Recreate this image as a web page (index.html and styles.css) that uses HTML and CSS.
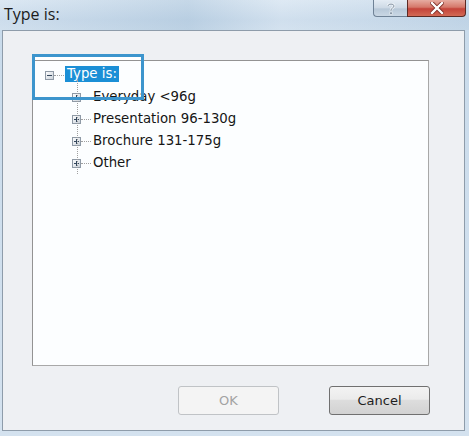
FILE: index.html
```html
<!DOCTYPE html>
<html>
<head>
<meta charset="utf-8">
<link rel="stylesheet" href="styles.css">
</head>
<body>
<div class="window">
  <div class="titlebar">
    <div class="title">Type is:</div>
    <div class="caption-buttons">
      <div class="cap-btn help">
        <svg width="12" height="13" viewBox="0 0 12 13"><path d="M3 4 C3 1.5 9 1.5 9 4 C9 6 6 6 6 8 L6 9" fill="none" stroke="#f4f7fa" stroke-width="2.4"/><path d="M3 4 C3 1.5 9 1.5 9 4 C9 6 6 6 6 8 L6 9" fill="none" stroke="#7f8fa0" stroke-width="1"/><rect x="4.8" y="10" width="2.4" height="2.4" fill="#7f8fa0" stroke="#f4f7fa" stroke-width="0.6"/></svg>
      </div>
      <div class="cap-btn close">
        <svg width="14" height="12" viewBox="0 0 14 12"><path d="M2 1 L12 11 M12 1 L2 11" stroke="#7a2a22" stroke-width="4" stroke-linecap="square"/><path d="M2 1 L12 11 M12 1 L2 11" stroke="#ffffff" stroke-width="2.4" stroke-linecap="square"/></svg>
      </div>
    </div>
  </div>
  <div class="panel">
    <div class="tree">
      <div class="row root">
        <span class="expander">
          <svg width="9" height="9" viewBox="0 0 9 9"><rect x="0.5" y="0.5" width="8" height="8" fill="url(#g1)" stroke="#8f9aa6"/><defs><linearGradient id="g1" x1="0" y1="0" x2="1" y2="1"><stop offset="0" stop-color="#ffffff"/><stop offset="1" stop-color="#c8d0d8"/></linearGradient></defs><path d="M2 4.5 H7" stroke="#33475c" stroke-width="1"/></svg>
        </span>
        <span class="hline"></span>
        <span class="label selected">Type is:</span>
      </div>
      <div class="children">
        <div class="row child">
          <span class="expander"><svg width="9" height="9" viewBox="0 0 9 9"><rect x="0.5" y="0.5" width="8" height="8" fill="url(#g1)" stroke="#8f9aa6"/><path d="M2 4.5 H7 M4.5 2 V7" stroke="#33475c" stroke-width="1"/></svg></span>
          <span class="hline"></span>
          <span class="label">Everyday &lt;96g</span>
        </div>
        <div class="row child">
          <span class="expander"><svg width="9" height="9" viewBox="0 0 9 9"><rect x="0.5" y="0.5" width="8" height="8" fill="url(#g1)" stroke="#8f9aa6"/><path d="M2 4.5 H7 M4.5 2 V7" stroke="#33475c" stroke-width="1"/></svg></span>
          <span class="hline"></span>
          <span class="label">Presentation 96-130g</span>
        </div>
        <div class="row child">
          <span class="expander"><svg width="9" height="9" viewBox="0 0 9 9"><rect x="0.5" y="0.5" width="8" height="8" fill="url(#g1)" stroke="#8f9aa6"/><path d="M2 4.5 H7 M4.5 2 V7" stroke="#33475c" stroke-width="1"/></svg></span>
          <span class="hline"></span>
          <span class="label">Brochure 131-175g</span>
        </div>
        <div class="row child">
          <span class="expander"><svg width="9" height="9" viewBox="0 0 9 9"><rect x="0.5" y="0.5" width="8" height="8" fill="url(#g1)" stroke="#8f9aa6"/><path d="M2 4.5 H7 M4.5 2 V7" stroke="#33475c" stroke-width="1"/></svg></span>
          <span class="hline"></span>
          <span class="label">Other</span>
        </div>
      </div>
    </div>
    <div class="buttons">
      <button class="btn disabled">OK</button>
      <button class="btn">Cancel</button>
    </div>
  </div>
  <div class="callout"></div>
</div>
</body>
</html>
```

FILE: styles.css
```css
html, body {
  margin: 0;
  padding: 0;
}
body {
  width: 469px;
  height: 436px;
  overflow: hidden;
  background: linear-gradient(180deg, #d6e4f1 0px, #c4d7e9 20px, #c9dbeb 30px, #d4e2ef 436px);
  font-family: "DejaVu Sans", sans-serif;
}
.window {
  position: relative;
  width: 469px;
  height: 436px;
  display: flex;
  flex-direction: column;
}
.titlebar {
  height: 30px;
  display: flex;
  justify-content: space-between;
  align-items: flex-start;
  background: linear-gradient(90deg, rgba(255,255,255,0.15), rgba(150,180,205,0.25) 40%, rgba(255,255,255,0.2) 60%, rgba(170,195,215,0.2));
}
.title {
  font-family: "Open Sans", sans-serif;
  font-size: 16px;
  color: #1b1b1b;
  padding: 4px 0 0 4px;
  line-height: 20px;
}
.caption-buttons {
  display: flex;
  margin-right: 3px;
  height: 18px;
}
.cap-btn {
  height: 17px;
  display: flex;
  align-items: center;
  justify-content: center;
  box-sizing: border-box;
}
.help {
  width: 34px;
  border: 1px solid #6f8296;
  border-top: none;
  border-right: none;
  border-bottom-left-radius: 4px;
  background: linear-gradient(180deg, #e4ecf4 0%, #cdd9e5 50%, #b7c8d8 55%, #c9d7e4 100%);
}
.close {
  width: 59px;
  border: 1px solid #5c2a24;
  border-top: none;
  border-bottom-right-radius: 4px;
  background: linear-gradient(180deg, #e6aca1 0%, #d5786a 45%, #c4443a 55%, #d36a55 100%);
}
.panel {
  margin-left: 2px;
  width: 463px;
  height: 401px;
  box-sizing: border-box;
  border: 1px solid #8e9caa;
  background: #eef0f3;
  display: flex;
  flex-direction: column;
  padding: 29px 0 0 29px;
}
.tree {
  width: 397px;
  height: 306px;
  box-sizing: border-box;
  border: 1px solid #939393;
  border-right-color: #a8a8a8;
  border-bottom-color: #a8a8a8;
  background: #fcfeff;
  padding-top: 3px;
  font-size: 13.3px;
  color: #161616;
}
.row {
  height: 22px;
  display: flex;
  align-items: center;
}
.root {
  padding-left: 12px;
}
.child {
  padding-left: 39px;
}
.expander {
  width: 9px;
  height: 9px;
  display: flex;
  flex: none;
}
.hline {
  width: 10px;
  height: 0;
  border-top: 1px dotted #a0a0a0;
  flex: none;
}
.label {
  padding: 0 2px;
  line-height: 16px;
  white-space: nowrap;
}
.root .label {
  margin-left: 1px;
  margin-top: -3px;
}
.child .label {
  margin-left: 0;
  margin-top: -1px;
}
.selected {
  background: #1b8fd6;
  color: #ffffff;
}
.children {
  position: relative;
}
.children::before {
  content: "";
  position: absolute;
  left: 44px;
  top: -6px;
  height: 94px;
  border-left: 1px dotted #a0a0a0;
}
.buttons {
  display: flex;
  gap: 50px;
  margin-top: 20px;
  padding-left: 146px;
}
.btn {
  width: 101px;
  height: 29px;
  box-sizing: border-box;
  border: 1px solid #707070;
  border-radius: 3px;
  background: linear-gradient(180deg, #f3f3f3 0%, #ebebeb 45%, #dddddd 50%, #d2d2d2 100%);
  font-family: "DejaVu Sans", sans-serif;
  font-size: 13px;
  color: #1e1e1e;
  padding: 0;
}
.btn.disabled {
  border-color: #c0c3c6;
  background: #f4f4f4;
  color: #a3a3a3;
}
.callout {
  position: absolute;
  left: 32px;
  top: 54px;
  width: 112px;
  height: 46px;
  box-sizing: border-box;
  border: 3px solid #3c95cd;
  background: linear-gradient(#ffffff, #ffffff) top left / 100% 3px no-repeat;
}
```
